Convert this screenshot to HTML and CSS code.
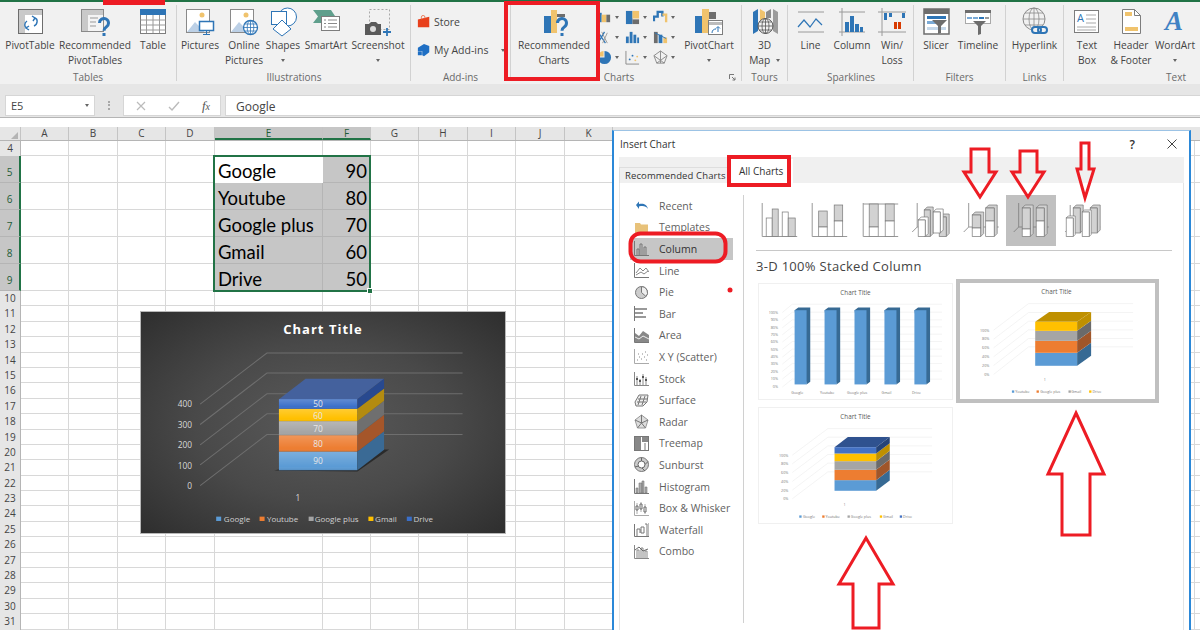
FILE: index.html
```html
<!DOCTYPE html>
<html lang="en">
<head>
  <meta charset="UTF-8">
  <meta name="viewport" content="width=device-width, initial-scale=1">
  <title>Insert Chart - Excel</title>
  <link rel="stylesheet" href="styles.css">
</head>
<body>
  <div class="top-strip"></div>

  <!-- Ribbon -->
  <div class="ribbon">
    <div class="group tables">
      <div class="tools">
        <div class="tool">
          <svg class="icon" viewBox="0 0 30 30"><rect x="3.500" y="2.500" width="24" height="24" fill="#fff" stroke="#6d6d6d"/><path d="M4 3h23v5H10v18H4z" fill="#c9c9c9"/><path d="M20 11c3 1 3 6-1 8M12 21c-3-1-3-5 0-7M17 9l3 2-2 3M14 23l-3-2 3-2" fill="none" stroke="#2e75b6" stroke-width="1.400"/></svg>
          <span>PivotTable</span>
        </div>
        <div class="tool">
          <svg class="icon" viewBox="0 0 30 30"><rect x="1.500" y="2.500" width="22" height="22" fill="#f4f4f4" stroke="#8a8a8a"/><path d="M2 3h21v5H8v16H2z" fill="#c9c9c9"/><path d="M10 11h8M10 15h6M10 19h6" stroke="#999"/><path d="M19.500 16a4.500 4.500 0 1 1 7 3.700c-1.800 1.200-2.500 2-2.500 4" fill="none" stroke="#2e75b6" stroke-width="3"/><rect x="22.500" y="26" width="3" height="3" fill="#2e75b6"/></svg>
          <span>Recommended<br>PivotTables</span>
        </div>
        <div class="tool">
          <svg class="icon" viewBox="0 0 30 30"><rect x="2.500" y="2.500" width="25" height="24" fill="#fff" stroke="#7d7d7d"/><rect x="2" y="2" width="26" height="6" fill="#2e75b6"/><path d="M2.500 13h25M2.500 18h25M2.500 23h25M8.500 8v18M15 8v18M21.500 8v18" stroke="#9a9a9a"/></svg>
          <span>Table</span>
        </div>
      </div>
      <div class="group-label">Tables</div>
    </div>

    <div class="group illustrations">
      <div class="tools">
        <div class="tool">
          <svg class="icon" viewBox="0 0 30 30"><rect x="1.500" y="2.500" width="23" height="23" fill="#fff" stroke="#8a8a8a"/><circle cx="17" cy="8" r="2.500" fill="#f0c36d"/><path d="M2 25l8-10 6 6 3-2v6z" fill="#bcd0e6"/><rect x="14.500" y="14.500" width="14" height="9" fill="#fff" stroke="#2e75b6" stroke-width="1.500"/><path d="M21.500 24v3M18 27.500h7" stroke="#2e75b6"/></svg>
          <span>Pictures</span>
        </div>
        <div class="tool">
          <svg class="icon" viewBox="0 0 30 30"><rect x="1.500" y="2.500" width="23" height="23" fill="#fff" stroke="#8a8a8a"/><circle cx="17" cy="8" r="2.500" fill="#f0c36d"/><path d="M2 25l8-10 6 6 3-2v6z" fill="#bcd0e6"/><circle cx="21.500" cy="20.500" r="7" fill="#fff" stroke="#2e75b6" stroke-width="1.300"/><path d="M14.500 20.500h14M21.500 13.500v14M16 17h11M16 24h11" stroke="#2e75b6" stroke-width=".8"/><ellipse cx="21.500" cy="20.500" rx="3.300" ry="7" fill="none" stroke="#2e75b6" stroke-width=".8"/></svg>
          <span>Online<br>Pictures</span>
        </div>
        <div class="tool">
          <svg class="icon" viewBox="0 0 30 30"><circle cx="19.500" cy="10" r="9" fill="#fff" stroke="#2e75b6"/><rect x="3.500" y="4.500" width="15" height="13" fill="#fff" stroke="#2e75b6"/><path d="M14 13l9 9-9 7-9-7z" fill="#fff" stroke="#2e75b6"/></svg>
          <span>Shapes</span>
          <i class="caret"></i>
        </div>
        <div class="tool">
          <svg class="icon" viewBox="0 0 30 30"><path d="M2 3h18l4 6H13l-3 3 3 4H2l5-6.500z" fill="#5f9f8c"/><rect x="10.500" y="9.500" width="18" height="14" fill="#fff" stroke="#7d7d7d"/><path d="M13 13h2M17 13h9M13 16.500h2M17 16.500h9M13 20h2M17 20h9" stroke="#8a8a8a"/></svg>
          <span>SmartArt</span>
        </div>
        <div class="tool">
          <svg class="icon" viewBox="0 0 30 30"><rect x="6.500" y="2.500" width="20" height="20" fill="none" stroke="#a9a9a9" stroke-dasharray="2 2"/><path d="M2 17h4l2-2h5l2 2h3v11H2z" fill="#5a5a5a"/><circle cx="10" cy="22" r="3" fill="#dcdcdc"/><path d="M24 21v8M20 25h8" stroke="#2e75b6" stroke-width="1.800"/></svg>
          <span>Screenshot</span>
          <i class="caret"></i>
        </div>
      </div>
      <div class="group-label">Illustrations</div>
    </div>

    <div class="group addins">
      <div class="addin-list">
        <div class="addin">
          <svg viewBox="0 0 16 16" width="14" height="14"><path d="M1 5l13-3v12H1z" fill="#e8401c"/><path d="M5 5V2.500a2 2 0 0 1 4 0V4" fill="none" stroke="#e8704c"/></svg>
          <span>Store</span>
        </div>
        <div class="addin">
          <svg viewBox="0 0 16 16" width="14" height="14"><path d="M8 1l6 2.500v7L8 15l-2-1V9H1V5.500z" fill="#1f6fc4"/><rect x="1" y="9.500" width="4.500" height="4.500" fill="#1f6fc4"/></svg>
          <span>My Add-ins</span>
          <i class="caret side"></i>
        </div>
      </div>
      <div class="group-label">Add-ins</div>
    </div>

    <div class="group charts">
      <div class="tools">
        <div class="tool">
          <svg class="icon" viewBox="0 0 30 30"><rect x="5" y="9" width="7" height="17" fill="#2e75b6"/><rect x="12" y="3" width="6" height="23" fill="#f0c36d"/><rect x="18" y="7" width="8" height="3" fill="#6d6d6d"/><path d="M18.500 16a4.500 4.500 0 1 1 7 3.700c-1.800 1.200-2.500 2-2.500 4" fill="none" stroke="#2e75b6" stroke-width="3"/><rect x="21.500" y="26" width="3" height="3" fill="#2e75b6"/></svg>
          <span>Recommended<br>Charts</span>
        </div>
        <div class="gallery">
          <div class="mini"><svg viewBox="0 0 16 16"><rect x="0" y="3" width="5" height="10" fill="#2e75b6"/><rect x="5" y="5" width="5" height="8" fill="#f0c36d"/><rect x="10" y="5" width="4" height="8" fill="#6d6d6d"/></svg><i class="caret"></i></div>
          <div class="mini"><svg viewBox="0 0 16 16"><rect x="1" y="1" width="7" height="14" fill="#2e75b6"/><rect x="8" y="1" width="7" height="8" fill="#f0c36d"/><rect x="8" y="10" width="7" height="5" fill="#6d6d6d"/></svg><i class="caret"></i></div>
          <div class="mini"><svg viewBox="0 0 16 16"><path d="M1 12V7h4V2h5v5" fill="none" stroke="#2e75b6" stroke-width="2.500"/><path d="M10 5h4v8" fill="none" stroke="#f0c36d" stroke-width="2.500"/></svg><i class="caret"></i></div>
          <div class="mini"><svg viewBox="0 0 16 16"><path d="M1 2l8 12M8 2l-7 12" stroke="#2e75b6" stroke-width="1.300"/><path d="M5 2l6 12M11 3l-5 11" stroke="#9a9a9a"/></svg><i class="caret"></i></div>
          <div class="mini"><svg viewBox="0 0 16 16"><rect x="1" y="7" width="3" height="7" fill="#2e75b6"/><rect x="5" y="2" width="3" height="12" fill="#2e75b6"/><rect x="9" y="5" width="3" height="9" fill="#2e75b6"/><rect x="13" y="8" width="2" height="6" fill="#2e75b6"/></svg><i class="caret"></i></div>
          <div class="mini"><svg viewBox="0 0 16 16"><rect x="1" y="2" width="4" height="12" fill="#6d6d6d"/><rect x="6" y="5" width="4" height="9" fill="#2e75b6"/><rect x="11" y="8" width="4" height="6" fill="#f0c36d"/><path d="M2 3l6 3 6 3" stroke="#2e75b6" fill="none"/></svg><i class="caret"></i></div>
          <div class="mini"><svg viewBox="0 0 16 16"><path d="M8 1a7 7 0 1 1-7 7h7z" fill="#2e75b6"/><path d="M1 7a7 7 0 0 1 6-6v6z" fill="#f0c36d"/></svg><i class="caret"></i></div>
          <div class="mini"><svg viewBox="0 0 16 16"><path d="M1 1v14h14" fill="none" stroke="#8a8a8a"/><circle cx="5" cy="10" r="1" fill="#2e75b6"/><circle cx="8" cy="6" r="1" fill="#2e75b6"/><circle cx="11" cy="11" r="1" fill="#f0c36d"/><circle cx="13" cy="7" r="1" fill="#f0c36d"/></svg><i class="caret"></i></div>
          <div class="mini"><svg viewBox="0 0 16 16"><path d="M8 1l7 5-3 8H4L1 6zM8 1v13M1 6l11 8M15 6L4 14" fill="none" stroke="#8a8a8a"/></svg><i class="caret"></i></div>
        </div>
        <div class="tool">
          <svg class="icon" viewBox="0 0 30 30"><rect x="1" y="9" width="7" height="17" fill="#2e75b6"/><rect x="8" y="2" width="7" height="24" fill="#f0c36d"/><rect x="15" y="5" width="7" height="7" fill="#6d6d6d"/><rect x="14.500" y="13.500" width="14" height="14" fill="#fff" stroke="#7d7d7d"/><path d="M15 15h13v3H15z" fill="#bcbcbc"/><path d="M18 26c0-3 2-4 4-4M24 25v-5M22 21.500l2-2 2 2" stroke="#2e75b6" fill="none"/></svg>
          <span>PivotChart</span>
          <i class="caret"></i>
        </div>
      </div>
      <div class="group-label">Charts</div>
      <svg class="launcher" viewBox="0 0 7 7"><path d="M.5 5V.5H5M3 3l3 3M6 3.500V6H3.500" fill="none" stroke="#777"/></svg>
    </div>

    <div class="group tours">
      <div class="tools">
        <div class="tool">
          <svg class="icon" viewBox="0 0 30 30"><path d="M3 5l5-3v22l-5 3z" fill="#2e75b6"/><path d="M10 2l5 3v8h-5z" fill="#f0c36d"/><path d="M16 5l5-3v9h-5z" fill="#8c8c8c"/><path d="M23 2l5 3v22l-5-3z" fill="#9c9c9c"/><circle cx="15.500" cy="19" r="7.500" fill="#f1f1f1" stroke="#555"/><path d="M8 19h15M15.500 11.500v15M9.500 15h12M9.500 23h12" stroke="#555" stroke-width=".8"/><ellipse cx="15.500" cy="19" rx="3.500" ry="7.500" fill="none" stroke="#555" stroke-width=".8"/></svg>
          <span>3D<br>Map <i class="caret side"></i></span>
        </div>
      </div>
      <div class="group-label">Tours</div>
    </div>

    <div class="group sparklines">
      <div class="tools">
        <div class="tool">
          <svg class="icon" viewBox="0 0 30 30"><path d="M2 5h26M2 25h26" stroke="#9a9a9a"/><path d="M2 20l6-7 6 7 6-8 6 6" fill="none" stroke="#2e75b6" stroke-width="1.200"/></svg>
          <span>Line</span>
        </div>
        <div class="tool">
          <svg class="icon" viewBox="0 0 30 30"><path d="M2 5h26M2 25h26M5 1v28" stroke="#9a9a9a"/><rect x="8" y="15" width="4" height="10" fill="#2e75b6"/><rect x="13" y="9" width="4" height="16" fill="#2e75b6"/><rect x="18" y="17" width="4" height="8" fill="#2e75b6"/><rect x="23" y="20" width="3" height="5" fill="#2e75b6"/></svg>
          <span>Column</span>
        </div>
        <div class="tool">
          <svg class="icon" viewBox="0 0 30 30"><path d="M1 5h28M1 25h28M5 1v28" stroke="#9a9a9a"/><rect x="7" y="6" width="3" height="7" fill="#2e75b6"/><rect x="12" y="6" width="3" height="4" fill="#2e75b6"/><rect x="17" y="15" width="3" height="7" fill="#d83b01"/><rect x="21" y="15" width="3" height="7" fill="#d83b01"/><rect x="25" y="6" width="3" height="5" fill="#2e75b6"/></svg>
          <span>Win/<br>Loss</span>
        </div>
      </div>
      <div class="group-label">Sparklines</div>
    </div>

    <div class="group filters">
      <div class="tools">
        <div class="tool">
          <svg class="icon" viewBox="0 0 30 30"><rect x="3" y="2" width="25" height="25" fill="#fff" stroke="#6d6d6d" stroke-width="1.500"/><rect x="3" y="2" width="25" height="5" fill="#6d6d6d"/><rect x="6" y="9" width="19" height="3" fill="#2e75b6"/><rect x="6" y="14" width="10" height="3" fill="#7aaad6"/><rect x="6" y="20" width="19" height="3" fill="#c5d8ea"/><path d="M11 13h15l-6 6v7l-3 1v-8z" fill="#6d6d6d"/></svg>
          <span>Slicer</span>
        </div>
        <div class="tool">
          <svg class="icon" viewBox="0 0 30 30"><rect x="2.500" y="3.500" width="25" height="13" fill="#fff" stroke="#a9a9a9"/><rect x="2" y="3" width="26" height="3" fill="#6d6d6d"/><path d="M4 11h5M10 11h5" stroke="#7aaad6" stroke-width="2"/><path d="M16 11h5" stroke="#2e75b6" stroke-width="2"/><path d="M22 11h4" stroke="#9a9a9a" stroke-width="2"/><path d="M10 14h13l-5 5v8l-3 1v-9z" fill="#6d6d6d"/></svg>
          <span>Timeline</span>
        </div>
      </div>
      <div class="group-label">Filters</div>
    </div>

    <div class="group links">
      <div class="tools">
        <div class="tool">
          <svg class="icon" viewBox="0 0 30 30"><circle cx="14" cy="12" r="11" fill="none" stroke="#8a8a8a"/><path d="M3 12h22M14 1v22M5 6h18M5 18h18" stroke="#8a8a8a" stroke-width=".8"/><ellipse cx="14" cy="12" rx="5" ry="11" fill="none" stroke="#8a8a8a" stroke-width=".8"/><rect x="12" y="20" width="9" height="6" rx="3" fill="#f1f1f1" stroke="#2e75b6" stroke-width="2"/><rect x="18" y="20" width="9" height="6" rx="3" fill="none" stroke="#2e75b6" stroke-width="2"/></svg>
          <span>Hyperlink</span>
        </div>
      </div>
      <div class="group-label">Links</div>
    </div>

    <div class="group text-group">
      <div class="tools">
        <div class="tool">
          <svg class="icon" viewBox="0 0 30 30"><rect x="2.500" y="3.500" width="24" height="22" fill="#fff" stroke="#7d7d7d"/><text class="word-a" x="5" y="15" font-size="11">A</text><path d="M14 8h10M14 12h10M14 16h10M5 20h19M5 23h19" stroke="#a9a9a9"/></svg>
          <span>Text<br>Box</span>
        </div>
        <div class="tool">
          <svg class="icon" viewBox="0 0 30 30"><path d="M6.500 2.500h12l6 6v18h-18z" fill="#fff" stroke="#7d7d7d"/><path d="M18.500 2.500v6h6" fill="none" stroke="#7d7d7d"/><rect x="9" y="5" width="7" height="4" fill="#f0c36d"/><rect x="9" y="20" width="13" height="4" fill="#f0c36d"/></svg>
          <span>Header<br>&amp; Footer</span>
        </div>
        <div class="tool">
          <svg class="icon" viewBox="0 0 30 30"><text class="word-art" x="5" y="23" font-size="27">A</text></svg>
          <span>WordArt</span>
          <i class="caret"></i>
        </div>
      </div>
      <div class="group-label">Text</div>
    </div>
  </div>

  <!-- Formula bar -->
  <div class="formula-bar">
    <div class="name-box">E5<i class="caret"></i></div>
    <div class="grip"></div>
    <div class="fn-box">
      <svg viewBox="0 0 10 10" width="10" height="10"><path d="M1 1l8 8M9 1l-8 8" stroke="#bbb" stroke-width="1.200"/></svg>
      <svg viewBox="0 0 12 10" width="12" height="10"><path d="M1 6l3 3 7-8" fill="none" stroke="#bbb" stroke-width="1.400"/></svg>
      <span class="fx">f<small>x</small></span>
    </div>
    <div class="formula-input">Google</div>
  </div>

  <!-- Worksheet -->
  <div class="sheet">
    <div class="row head">
      <span class="corner"></span>
      <span>A</span><span>B</span><span>C</span><span>D</span>
      <span class="on">E</span><span class="on">F</span>
      <span>G</span><span>H</span><span>I</span><span>J</span><span>K</span>
    </div>
    <div class="row"><span class="rh">4</span></div>
    <div class="row data"><span class="rh on">5</span><span class="cell name active">Google</span><span class="cell val">90</span></div>
    <div class="row data"><span class="rh on">6</span><span class="cell name">Youtube</span><span class="cell val">80</span></div>
    <div class="row data"><span class="rh on">7</span><span class="cell name">Google plus</span><span class="cell val">70</span></div>
    <div class="row data"><span class="rh on">8</span><span class="cell name">Gmail</span><span class="cell val">60</span></div>
    <div class="row data"><span class="rh on">9</span><span class="cell name">Drive</span><span class="cell val">50</span></div>
    <div class="row"><span class="rh">10</span></div>
    <div class="row"><span class="rh">11</span></div>
    <div class="row"><span class="rh">12</span></div>
    <div class="row"><span class="rh">13</span></div>
    <div class="row"><span class="rh">14</span></div>
    <div class="row"><span class="rh">15</span></div>
    <div class="row"><span class="rh">16</span></div>
    <div class="row"><span class="rh">17</span></div>
    <div class="row"><span class="rh">18</span></div>
    <div class="row"><span class="rh">19</span></div>
    <div class="row"><span class="rh">20</span></div>
    <div class="row"><span class="rh">21</span></div>
    <div class="row"><span class="rh">22</span></div>
    <div class="row"><span class="rh">23</span></div>
    <div class="row"><span class="rh">24</span></div>
    <div class="row"><span class="rh">25</span></div>
    <div class="row"><span class="rh">26</span></div>
    <div class="row"><span class="rh">27</span></div>
    <div class="row"><span class="rh">28</span></div>
    <div class="row"><span class="rh">29</span></div>
    <div class="row"><span class="rh">30</span></div>
    <div class="row"><span class="rh">31</span></div>
    <div class="selection"><i class="handle"></i></div>
  </div>

  <!-- Chart floating on the sheet -->
  <div class="dark-chart">
    <svg viewBox="35 20 1090 662" width="364" height="221">
      <defs>
        <linearGradient id="sheen" x1="0" y1="0" x2="0" y2="1">
          <stop offset="0" stop-color="#fff" stop-opacity=".2"/>
          <stop offset=".8" stop-color="#fff" stop-opacity="0"/>
          <stop offset="1" stop-color="#000" stop-opacity=".1"/>
        </linearGradient>
      </defs>
      <text class="dc-title" x="580" y="86" text-anchor="middle">Chart Title</text>
      <g fill="none" stroke="#6e6e6e" stroke-width="3">
        <path d="M212 540L412 387H998M212 478L412 325H998M212 418L412 265H998M212 357L412 203H998M212 296L412 143H998"/>
      </g>
      <g class="dc-axis" text-anchor="end">
        <text x="188" y="305">400</text><text x="188" y="367">300</text><text x="188" y="428">200</text><text x="188" y="489">100</text><text x="188" y="549">0</text>
      </g>
      <path d="M434 495L683 498L778 432L700 432z" fill="#2a2a2a"/>
      <path d="M448 281L528 220H763L683 281z" fill="#44619d"/>
      <rect x="448" y="438" width="235" height="56" fill="#5b9bd5"/>
      <rect x="448" y="389" width="235" height="49" fill="#ed7d31"/>
      <rect x="448" y="347" width="235" height="42" fill="#a5a5a5"/>
      <rect x="448" y="310" width="235" height="37" fill="#ffc000"/>
      <rect x="448" y="281" width="235" height="29" fill="#3a6fc9"/>
      <rect x="448" y="438" width="235" height="56" fill="url(#sheen)"/>
      <rect x="448" y="389" width="235" height="49" fill="url(#sheen)"/>
      <rect x="448" y="347" width="235" height="42" fill="url(#sheen)"/>
      <rect x="448" y="310" width="235" height="37" fill="url(#sheen)"/>
      <rect x="448" y="281" width="235" height="29" fill="url(#sheen)"/>
      <path d="M683 438L763 377V433L683 494z" fill="#3a6a95"/>
      <path d="M683 389L763 328V377L683 438z" fill="#a5562a"/>
      <path d="M683 347L763 286V328L683 389z" fill="#6f6f6f"/>
      <path d="M683 310L763 249V286L683 347z" fill="#b38b10"/>
      <path d="M683 281L763 220V249L683 310z" fill="#28498f"/>
      <g class="dc-data" text-anchor="middle">
        <text x="565" y="476">90</text><text x="565" y="425">80</text><text x="565" y="379">70</text><text x="565" y="342">60</text><text x="565" y="306">50</text>
      </g>
      <text class="dc-axis" x="505" y="585" text-anchor="middle">1</text>
      <rect x="260" y="633" width="15" height="13" fill="#5b9bd5"/><text class="dc-legend" x="283" y="648">Google</text>
      <rect x="390" y="633" width="15" height="13" fill="#ed7d31"/><text class="dc-legend" x="412" y="648">Youtube</text>
      <rect x="537" y="633" width="15" height="13" fill="#a5a5a5"/><text class="dc-legend" x="555" y="648">Google plus</text>
      <rect x="716" y="633" width="15" height="13" fill="#ffc000"/><text class="dc-legend" x="736" y="648">Gmail</text>
      <rect x="831" y="633" width="15" height="13" fill="#3a6fc9"/><text class="dc-legend" x="851" y="648">Drive</text>
    </svg>
  </div>

  <!-- Insert Chart dialog -->
  <div class="dialog">
    <div class="dialog-title">
      <span>Insert Chart</span>
      <span class="help">?</span>
      <svg class="close" viewBox="0 0 10 10" width="10" height="10"><path d="M.5 .5l9 9M9.500 .5l-9 9" stroke="#444"/></svg>
    </div>
    <div class="tabs">
      <div class="tab">Recommended Charts</div>
      <div class="tab current">All Charts</div>
    </div>
    <div class="dialog-body">
      <div class="type-list">
        <div class="type blue"><svg viewBox="0 0 15 15"><path d="M2 7l3-3.500v2.500c4-1 8 0 9 5-2-3-5-3.500-9-2.500v2.500z" fill="#2e75b6"/></svg>Recent</div>
        <div class="type"><svg viewBox="0 0 15 15"><path d="M1 3h5l1 1.500h7V13H1z" fill="#e8c27a"/></svg>Templates</div>
        <div class="type selected"><svg viewBox="0 0 15 15"><path d="M.5 0v14.500H15M3 14V8h2v6M6 14V3h2v11M10 14V6h2v8" fill="none" stroke="#777"/></svg>Column</div>
        <div class="type"><svg viewBox="0 0 15 15"><path d="M.5 0v14.500H15" fill="none" stroke="#777"/><path d="M2 10l4-5 3 3 3-3 3 4M2 12l5-3 3 2 4-3" fill="none" stroke="#888"/></svg>Line</div>
        <div class="type"><svg viewBox="0 0 15 15"><circle cx="7.500" cy="7.500" r="6" fill="#ccc" stroke="#777"/><path d="M7.500 1.500v6l4.500 4a6 6 0 0 0-4.500-10z" fill="#eee" stroke="#777"/></svg>Pie</div>
        <div class="type"><svg viewBox="0 0 15 15"><path d="M.5 0v15" stroke="#777"/><path d="M1 2h12v2H1zM1 6h8v2H1zM1 10h11v2H1z" fill="#999"/></svg>Bar</div>
        <div class="type"><svg viewBox="0 0 15 15"><path d="M.5 0v14.500H15" fill="none" stroke="#777"/><path d="M1 5l4 3 4-5 6 4v7H1z" fill="#888"/><path d="M1 9l4 2 4-3 6 3" fill="none" stroke="#eee"/></svg>Area</div>
        <div class="type"><svg viewBox="0 0 15 15"><path d="M.5 0v14.500H15" fill="none" stroke="#aaa"/><path d="M3 11h1M5 8h1M7 10h1M8 5h1M10 8h1M11 3h1M13 6h1M4 5h1M12 11h1" stroke="#888" stroke-dasharray="1 1"/></svg>X Y (Scatter)</div>
        <div class="type"><svg viewBox="0 0 15 15"><path d="M.5 1v13.500H15M3 5v9M6 8v6M9 3v11M12 6v8" fill="none" stroke="#888"/><path d="M2 8h2M5 10h2M8 6h2M11 9h2" stroke="#555" stroke-width="2"/></svg>Stock</div>
        <div class="type"><svg viewBox="0 0 15 15"><path d="M1 9l4-7h9l-1 7-4 4H2zM4 6h9M3 9h9M7 3l-3 9M11 3l-3 9" fill="#eee" stroke="#777"/></svg>Surface</div>
        <div class="type"><svg viewBox="0 0 15 15"><path d="M7.500 1l6.500 5-2.500 8h-8L1 6z" fill="#ddd" stroke="#999"/><path d="M7.500 1v8l-4 5M7.500 9l4 5M1 6l6.500 3L14 6" fill="none" stroke="#777"/></svg>Radar</div>
        <div class="type"><svg viewBox="0 0 15 15"><rect x=".5" y=".5" width="14" height="14" fill="#fff" stroke="#777"/><path d="M1 1h6v13H1zM8 1h6v5H8z" fill="#888"/><path d="M11 7v7" stroke="#777"/></svg>Treemap</div>
        <div class="type"><svg viewBox="0 0 15 15"><circle cx="7.500" cy="7.500" r="7" fill="#ccc" stroke="#777"/><circle cx="7.500" cy="7.500" r="3.500" fill="#fff" stroke="#666"/><path d="M7.500 .5v3.500M1 10l3.500-1M11 7.500l3-3M8 11l3 3" stroke="#666"/></svg>Sunburst</div>
        <div class="type"><svg viewBox="0 0 15 15"><path d="M.5 0v14.500H15" fill="none" stroke="#777"/><path d="M2 9h2v5H2zM5 4h3v10H5zM8 2h2v12H8zM11 8h2v6h-2z" fill="#aaa" stroke="#777" stroke-width=".6"/></svg>Histogram</div>
        <div class="type"><svg viewBox="0 0 15 15"><path d="M.5 0v14.500H15M3 2v11M7 1v10M11 3v10" fill="none" stroke="#aaa"/><path d="M2 5h2v4H2zM6 3h2v5H6zM10 6h2v5h-2z" fill="#fff" stroke="#666"/></svg>Box &amp; Whisker</div>
        <div class="type"><svg viewBox="0 0 15 15"><path d="M.5 2v12.500H15V1M3 14V7M3 7h3v4M7 5h3v6h-3zM11 2h2v12" fill="none" stroke="#777"/></svg>Waterfall</div>
        <div class="type"><svg viewBox="0 0 15 15"><path d="M.5 1v13.500H15M3 14V6h2v8M7 14V4h2v10M11 14V7h2v7" fill="none" stroke="#888"/><path d="M1 6l4-3 4 4 5-2" fill="none" stroke="#666"/></svg>Combo</div>
      </div>

      <div class="pane">
        <div class="subtypes">
          <button class="subtype"><svg viewBox="0 0 50 51"><path d="M8 8v33.500h35" fill="none" stroke="#999"/><rect class="w" x="12" y="23" width="6" height="18.500"/><rect class="g" x="18" y="14" width="6" height="27.500"/><rect class="w" x="28" y="17" width="6" height="24.500"/><rect class="g" x="34" y="23" width="7" height="18.500"/></svg></button>
          <button class="subtype"><svg viewBox="0 0 50 51"><path d="M8 8v33.500h35" fill="none" stroke="#999"/><rect class="g" x="14.500" y="16" width="8.500" height="16"/><rect class="w" x="14.500" y="32" width="8.500" height="9.500"/><rect class="g" x="30" y="10" width="8.500" height="16"/><rect class="w" x="30" y="26" width="8.500" height="15.500"/></svg></button>
          <button class="subtype"><svg viewBox="0 0 50 51"><path d="M8 8v33.500h35M8 9h35" fill="none" stroke="#999"/><rect class="g" x="14" y="9" width="9" height="23"/><rect class="w" x="14" y="32" width="9" height="9.500"/><rect class="g" x="30" y="9" width="9" height="17"/><rect class="w" x="30" y="26" width="9" height="15.500"/></svg></button>
          <button class="subtype"><svg viewBox="0 0 50 51"><path d="M12 8v24L7 37M12 32h30" fill="none" stroke="#999"/><path class="g" d="M19 15l3-3h6v26.500l-3 3V15z"/><rect class="g" x="19" y="15" width="6" height="26.500"/><path class="w" d="M13 25l3-3h7v16.500l-3 3V25z"/><rect class="w" x="13" y="25" width="7" height="16.500"/><path class="g" d="M34 22l3-3h7v19.500l-3 3V22z"/><rect class="g" x="34" y="22" width="7" height="19.500"/><path class="w" d="M28 17l3-3h7v21l-3 3V17z"/><rect class="w" x="28" y="17" width="7" height="21"/></svg></button>
          <button class="subtype"><svg viewBox="0 0 50 51"><path d="M12.500 8v24L7.500 37M12.500 32h30" fill="none" stroke="#999"/><path class="g" d="M16 20l3-3h8.500v21.500l-3 3V20z"/><rect class="g" x="16" y="20" width="8.500" height="13"/><rect class="w" x="16" y="33" width="8.500" height="8.500"/><path class="g" d="M29.500 13l3-3h8.500v28.500l-3 3V13z"/><rect class="g" x="29.500" y="13" width="8.500" height="13"/><rect class="w" x="29.500" y="26" width="8.500" height="15.500"/></svg></button>
          <button class="subtype on"><svg viewBox="0 0 50 51"><path d="M12.500 8v24L7.500 37M12.500 32h30" fill="none" stroke="#888"/><path class="g" d="M16 13l3-3h8v28.500l-3 3V13z"/><rect class="g" x="16" y="13" width="8" height="21"/><rect class="w" x="16" y="34" width="8" height="7.500"/><path class="g" d="M30 13l3-3h8v28.500l-3 3V13z"/><rect class="g" x="30" y="13" width="8" height="13"/><rect class="w" x="30" y="26" width="8" height="15.500"/></svg></button>
          <button class="subtype"><svg viewBox="0 0 50 51"><path d="M14 10v22L9 37M14 32h30" fill="none" stroke="#999"/><path class="g" d="M17 13l3-3h7v25l-3 3V13z"/><rect class="g" x="17" y="13" width="7" height="25"/><path class="g" d="M34 13l3-3h7v25l-3 3V13z"/><rect class="g" x="34" y="13" width="7" height="25"/><path class="w" d="M10 23l2-2h7v18.500l-2 2V23z"/><rect class="w" x="10" y="23" width="7" height="18.500"/><path class="w" d="M26 17l2-2h7v24.500l-2 2V17z"/><rect class="w" x="26" y="17" width="7" height="24.500"/></svg></button>
        </div>
        <div class="pane-rule"></div>
        <div class="pane-heading">3-D 100% Stacked Column</div>

        <div class="previews">
          <div class="preview">
            <svg viewBox="25 25 583 347" width="194" height="116">
              <text class="pv-title" x="315" y="57" text-anchor="middle">Chart Title</text>
              <g stroke="#efefef" stroke-width="2" fill="none">
                <path d="M95 334L125 310H575M95 310L125 286H575M95 287L125 263H575M95 265L125 241H575M95 244L125 220H575M95 221L125 197H575M95 199L125 175H575M95 177L125 153H575M95 156L125 132H575M95 133L125 109H575M95 110L125 85H575"/>
              </g>
              <g class="pv-axis" text-anchor="end">
                <text x="82" y="113">100%</text><text x="82" y="136">90%</text><text x="82" y="159">80%</text><text x="82" y="181">70%</text><text x="82" y="203">60%</text><text x="82" y="225">50%</text><text x="82" y="248">40%</text><text x="82" y="269">30%</text><text x="82" y="291">20%</text><text x="82" y="314">10%</text><text x="82" y="338">0%</text>
              </g>
              <g>
                <path d="M132 103l11-8h36v223l-11 8z" fill="#376a94"/><rect x="132" y="103" width="36" height="223" fill="#5b9bd5"/>
                <path d="M222 103l11-8h36v223l-11 8z" fill="#376a94"/><rect x="222" y="103" width="36" height="223" fill="#5b9bd5"/>
                <path d="M312 103l11-8h36v223l-11 8z" fill="#376a94"/><rect x="312" y="103" width="36" height="223" fill="#5b9bd5"/>
                <path d="M402 103l11-8h36v223l-11 8z" fill="#376a94"/><rect x="402" y="103" width="36" height="223" fill="#5b9bd5"/>
                <path d="M492 103l11-8h36v223l-11 8z" fill="#376a94"/><rect x="492" y="103" width="36" height="223" fill="#5b9bd5"/>
              </g>
              <g class="pv-axis" text-anchor="middle">
                <text x="140" y="354">Google</text><text x="230" y="354">Youtube</text><text x="320" y="354">Google plus</text><text x="408" y="354">Gmail</text><text x="498" y="354">Drive</text>
              </g>
            </svg>
          </div>
          <div class="preview picked">
            <svg viewBox="632 24 583 347" width="194" height="116">
              <text class="pv-title" x="922" y="57" text-anchor="middle">Chart Title</text>
              <path d="M733 298L838 215H1152M733 271L838 190H1152M733 245L838 164H1152M733 218L838 138H1152M733 192L838 112H1152M733 165L838 85H1152" fill="none" stroke="#efefef" stroke-width="2"/>
              <g class="pv-axis" text-anchor="end">
                <text x="720" y="169">100%</text><text x="720" y="196">80%</text><text x="720" y="222">60%</text><text x="720" y="249">40%</text><text x="720" y="275">20%</text><text x="720" y="302">0%</text>
              </g>
              <path d="M858 140L900 110H1026L984 140z" fill="#bf9000"/>
              <rect x="858" y="233" width="126" height="39" fill="#5b9bd5"/>
              <rect x="858" y="197" width="126" height="36" fill="#ed7d31"/>
              <rect x="858" y="167" width="126" height="30" fill="#a5a5a5"/>
              <rect x="858" y="140" width="126" height="27" fill="#ffc000"/>
              <path d="M984 233L1026 203V242L984 272z" fill="#376a94"/>
              <path d="M984 197L1026 167V203L984 233z" fill="#a0562a"/>
              <path d="M984 167L1026 137V167L984 197z" fill="#6a6a6a"/>
              <path d="M984 140L1026 110V137L984 167z" fill="#bf9000"/>
              <text class="pv-axis" x="887" y="319" text-anchor="middle">1</text>
              <rect x="788" y="346" width="7" height="7" fill="#5b9bd5"/><text class="pv-legend" x="798" y="354">Youtube</text>
              <rect x="862" y="346" width="7" height="7" fill="#ed7d31"/><text class="pv-legend" x="873" y="354">Google plus</text>
              <rect x="958" y="346" width="7" height="7" fill="#a5a5a5"/><text class="pv-legend" x="966" y="354">Gmail</text>
              <rect x="1020" y="346" width="7" height="7" fill="#ffc000"/><text class="pv-legend" x="1030" y="354">Drive</text>
            </svg>
          </div>
          <div class="preview">
            <svg viewBox="25 22 583 347" width="194" height="116">
              <text class="pv-title" x="315" y="55" text-anchor="middle">Chart Title</text>
              <path d="M125 294L232 213H545M125 268L232 187H545M125 242L232 161H545M125 215L232 135H545M125 189L232 109H545M125 163L232 83H545" fill="none" stroke="#efefef" stroke-width="2"/>
              <g class="pv-axis" text-anchor="end">
                <text x="113" y="167">100%</text><text x="113" y="193">80%</text><text x="113" y="219">60%</text><text x="113" y="246">40%</text><text x="113" y="273">20%</text><text x="113" y="298">0%</text>
              </g>
              <path d="M252 139L292 108H418L377 139z" fill="#2f528f"/>
              <rect x="252" y="238" width="125" height="32" fill="#5b9bd5"/>
              <rect x="252" y="207" width="125" height="31" fill="#ed7d31"/>
              <rect x="252" y="181" width="125" height="26" fill="#a5a5a5"/>
              <rect x="252" y="158" width="125" height="23" fill="#ffc000"/>
              <rect x="252" y="139" width="125" height="19" fill="#4472c4"/>
              <path d="M377 238L418 207V239L377 270z" fill="#376a94"/>
              <path d="M377 207L418 176V207L377 238z" fill="#a0562a"/>
              <path d="M377 181L418 150V176L377 207z" fill="#6a6a6a"/>
              <path d="M377 158L418 127V150L377 181z" fill="#bf9000"/>
              <path d="M377 139L418 108V127L377 158z" fill="#264478"/>
              <text class="pv-axis" x="282" y="317" text-anchor="middle">1</text>
              <rect x="146" y="344" width="7" height="7" fill="#5b9bd5"/><text class="pv-legend" x="157" y="352">Google</text>
              <rect x="215" y="344" width="7" height="7" fill="#ed7d31"/><text class="pv-legend" x="225" y="352">Youtube</text>
              <rect x="291" y="344" width="7" height="7" fill="#a5a5a5"/><text class="pv-legend" x="301" y="352">Google plus</text>
              <rect x="388" y="344" width="7" height="7" fill="#ffc000"/><text class="pv-legend" x="398" y="352">Gmail</text>
              <rect x="448" y="344" width="7" height="7" fill="#4472c4"/><text class="pv-legend" x="458" y="352">Drive</text>
            </svg>
          </div>
        </div>
      </div>
    </div>
  </div>

  <!-- Red annotations drawn on top of the screenshot -->
  <svg class="marks" viewBox="0 0 1200 630">
    <rect class="mark-fill" x="103" y="0" width="62" height="5"/>
    <rect class="heavy" x="506" y="3" width="92" height="76"/>
    <rect class="heavy" x="729" y="157" width="60" height="28"/>
    <rect class="heavy" x="630.500" y="233.500" width="95" height="28" rx="10"/>
    <circle class="mark-fill" cx="730" cy="290" r="2.500"/>
    <path d="M971 149h18v23h7l-16 25-16-25h7z"/>
    <path d="M1020 151h17v21h7l-16 25-16-25h8z"/>
    <path d="M1081 143h8v26h5l-9 29-8-29h4z"/>
    <path d="M1076 413l28 61h-14v61h-28v-61h-14z"/>
    <path d="M866 538l27 46h-14v44h-26v-44h-14z"/>
  </svg>
</body>
</html>
```

FILE: styles.css
```css
html, body {
  margin: 0;
  padding: 0;
}
body {
  position: relative;
  width: 1200px;
  height: 630px;
  overflow: hidden;
  background-color: #ffffff;
  font-family: "Open Sans", "Liberation Sans", sans-serif;
  color: #444444;
}
.top-strip {
  height: 2px;
  background-color: #217346;
}

/* ribbon */
.ribbon {
  display: flex;
  height: 82px;
  width: 1200px;
  padding-top: 3px;
  box-sizing: border-box;
  background-color: #f1f1f1;
}
.group {
  position: relative;
  flex: none;
  display: flex;
  flex-direction: column;
  box-sizing: border-box;
  height: 76px;
  border-right: 1px solid #d2d2d2;
}
.tables { width: 177px; }
.illustrations { width: 234px; padding-left: 1px; }
.addins { width: 100px; }
.charts { width: 231px; }
.tours { width: 46px; }
.sparklines { width: 126px; padding-left: 1px; }
.filters { width: 92px; }
.links { width: 58px; }
.text-group { width: 136px; border-right: none; }
.tools {
  display: grid;
  grid-auto-flow: column;
  height: 65px;
  padding-top: 2px;
  box-sizing: border-box;
}
.tables .tools { grid-template-columns: 60px 70px 46px; }
.illustrations .tools { grid-template-columns: 44px 44px 34px 52px 52px; }
.charts .tools { grid-template-columns: 86px 85px 54px; }
.tours .tools { grid-template-columns: 45px; }
.sparklines .tools { grid-template-columns: 43px 40px 40px; }
.filters .tools { grid-template-columns: 44px 40px; }
.links .tools { grid-template-columns: 57px; }
.text-group .tools { grid-template-columns: 46px 42px 46px; }
.tool {
  display: flex;
  flex-direction: column;
  align-items: center;
  min-width: 0;
  font-size: 10.2px;
  line-height: 15px;
  text-align: center;
  white-space: nowrap;
}
.icon {
  flex: none;
  width: 30px;
  height: 30px;
  margin-bottom: 1px;
}
.caret {
  display: inline-block;
  width: 0;
  height: 0;
  margin-top: 6px;
  border-left: 2.5px solid transparent;
  border-right: 2.5px solid transparent;
  border-top: 3px solid #666666;
}
.caret.side {
  margin: 0 0 2px 3px;
  vertical-align: middle;
}
.group-label {
  height: 11px;
  font-size: 10px;
  line-height: 15px;
  text-align: center;
  color: #6a6a6a;
}
.charts .group-label { padding-right: 14px; }
.text-group .group-label { padding-left: 88px; }
.launcher {
  position: absolute;
  right: 5px;
  bottom: 0;
  width: 7px;
  height: 7px;
}
.word-a {
  font-family: "Open Sans", sans-serif;
  fill: #2e75b6;
}
.word-art {
  font-family: "Liberation Serif", serif;
  font-style: italic;
  font-weight: bold;
  fill: #3f82c4;
}
.addin-list {
  height: 65px;
  padding: 3px 0 0 6px;
  box-sizing: border-box;
}
.addin {
  display: flex;
  align-items: center;
  gap: 3px;
  height: 28px;
  font-size: 10.5px;
  white-space: nowrap;
}
.addin .caret.side { margin: 0 0 0 10px; }
.gallery {
  display: grid;
  grid-template-columns: repeat(3, 28px);
  grid-auto-rows: 20px;
}
.mini {
  display: flex;
  align-items: center;
  gap: 3px;
}
.mini svg {
  width: 15px;
  height: 15px;
}
.mini .caret { margin-top: 0; }

/* formula bar */
.formula-bar {
  display: flex;
  height: 34px;
  padding: 11px 0 1px 5px;
  box-sizing: border-box;
  background-color: #e6e6e6;
  border-bottom: 1px solid #b5b5b5;
}
.name-box, .fn-box, .formula-input {
  background-color: #ffffff;
  border: 1px solid #d6d6d6;
  box-sizing: border-box;
}
.name-box {
  display: flex;
  align-items: center;
  justify-content: space-between;
  width: 90px;
  padding: 0 5px 0 5px;
  font-size: 11px;
}
.name-box .caret { margin-top: 0; }
.grip {
  width: 1px;
  height: 9px;
  margin: 6px 12px 0 13px;
  border-left: 2px dotted #a8a8a8;
}
.fn-box {
  display: flex;
  align-items: center;
  justify-content: space-between;
  width: 98px;
  margin-right: 4px;
  padding: 0 10px 0 12px;
}
.fx {
  font-family: "Liberation Serif", serif;
  font-style: italic;
  font-size: 13px;
  color: #555555;
}
.fx small { font-size: 10px; }
.formula-input {
  flex: 1;
  padding-left: 10px;
  font-size: 12px;
  line-height: 22px;
  border-right: none;
}

/* worksheet */
.sheet {
  --line: #d8d8d8;
  position: relative;
  margin-top: 9px;
  height: 503px;
  background-image:
    linear-gradient(var(--line), var(--line)), linear-gradient(var(--line), var(--line)),
    linear-gradient(var(--line), var(--line)), linear-gradient(var(--line), var(--line)),
    linear-gradient(var(--line), var(--line)), linear-gradient(var(--line), var(--line)),
    linear-gradient(var(--line), var(--line)), linear-gradient(var(--line), var(--line)),
    linear-gradient(var(--line), var(--line)), linear-gradient(var(--line), var(--line)),
    linear-gradient(var(--line), var(--line)), linear-gradient(var(--line), var(--line));
  background-size: 1px 100%;
  background-repeat: no-repeat;
  background-position: 68px 0, 117px 0, 165px 0, 214px 0, 322px 0, 370px 0,
    418px 0, 467px 0, 515px 0, 564px 0, 612px 0, 1194px 0;
}
.row {
  display: grid;
  grid-template-columns: 21px 48px 49px 48px 49px 108px 48px 48px 49px 48px 49px 48px;
  grid-template-rows: 100%;
  height: 15.4px;
  box-sizing: border-box;
  border-bottom: 1px solid var(--line);
}
.head {
  height: 14px;
  background-color: #e6e6e6;
  border-bottom: 1px solid #b5b5b5;
}
.head span {
  font-size: 10px;
  line-height: 13px;
  text-align: center;
  color: #444444;
  border-right: 1px solid #c4c4c4;
}
.head .on {
  height: 13px;
  background-color: #c6c6c6;
  color: #1f5c36;
  border-bottom: 2px solid #217346;
  box-sizing: border-box;
}
.corner {
  position: relative;
}
.corner::after {
  content: "";
  position: absolute;
  right: 2px;
  bottom: 1px;
  border-left: 7px solid transparent;
  border-bottom: 7px solid #b4b4b4;
}
.row:nth-child(2) { height: 15px; }
.rh {
  grid-column: 1;
  font-size: 10px;
  line-height: 15px;
  text-align: center;
  background-color: #e6e6e6;
  color: #444444;
  border-right: 1px solid #b5b5b5;
  margin-bottom: -1px;
}
.data {
  height: 27px;
}
.rh.on {
  background-color: #c6c6c6;
  color: #1f5c36;
  line-height: 33px;
  border-right: 2px solid #217346;
  box-sizing: border-box;
  border-bottom: 1px solid #b5b5b5;
}
.cell {
  font-family: "Lato", "Liberation Sans", sans-serif;
  font-size: 18.5px;
  line-height: 31px;
  color: #000000;
  background-color: #c6c6c6;
  box-sizing: border-box;
  white-space: nowrap;
  margin-bottom: -1px;
  border-bottom: 1px solid #b5b5b5;
}
.name {
  grid-column: 6;
  padding-left: 3px;
  border-right: 1px solid #b5b5b5;
}
.val {
  grid-column: 7;
  padding-right: 3px;
  text-align: right;
  border-right: 1px solid #e2e2e2;
}
.active {
  background-color: #ffffff;
  border-color: #ffffff;
}
.selection {
  position: absolute;
  left: 213px;
  top: 28px;
  width: 158px;
  height: 137px;
  box-sizing: border-box;
  border: 2px solid #217346;
}
.handle {
  position: absolute;
  right: -4px;
  bottom: -4px;
  width: 4px;
  height: 4px;
  background-color: #217346;
  border: 1px solid #ffffff;
}

/* dark chart */
.dark-chart {
  position: absolute;
  left: 141px;
  top: 312px;
  width: 364px;
  height: 221px;
  background: radial-gradient(ellipse at center, #5a5a5a 0%, #494949 50%, #2e2e2e 100%);
  outline: 1px solid #b8b8b8;
}
.dark-chart svg { display: block; }
.dc-title {
  font-family: "Open Sans", sans-serif;
  font-size: 39px;
  font-weight: bold;
  letter-spacing: 3px;
  fill: #ffffff;
}
.dc-axis {
  font-family: "Open Sans", sans-serif;
  font-size: 25px;
  fill: #d9d9d9;
}
.dc-data {
  font-family: "Open Sans", sans-serif;
  font-size: 25px;
  fill: #e8e8e8;
}
.dc-legend {
  font-family: "Open Sans", sans-serif;
  font-size: 24px;
  fill: #d0d0d0;
}

/* dialog */
.dialog {
  position: absolute;
  left: 612px;
  top: 130px;
  width: 579px;
  height: 510px;
  box-sizing: border-box;
  display: flex;
  flex-direction: column;
  padding: 0 5px 0 5px;
  background-color: #ffffff;
  border-top: 1px solid #9cc3e5;
  border-left: 2px solid #2b88d8;
  border-right: 2px solid #2b88d8;
}
.dialog-title {
  display: flex;
  align-items: center;
  height: 26px;
  padding: 0 7px 0 1px;
  font-size: 10px;
  color: #333333;
}
.dialog-title > span:first-child { flex: 1; }
.help {
  margin-right: 32px;
  font-size: 12px;
  font-weight: 600;
}
.tabs {
  display: flex;
  align-items: flex-end;
  height: 26px;
  background-color: #f0f0f0;
}
.tab {
  width: 110px;
  height: 16px;
  padding-left: 5px;
  font-size: 9.5px;
  line-height: 15px;
  letter-spacing: .12px;
  color: #333333;
  border: 1px solid #dedede;
  border-bottom: none;
  box-sizing: border-box;
  white-space: nowrap;
}
.tab.current {
  width: auto;
  height: 24px;
  line-height: 22px;
  padding: 0 9px;
  font-size: 10px;
  background-color: #ffffff;
  border-color: #ffffff;
  letter-spacing: 0;
}
.dialog-body {
  display: flex;
  flex: 1;
  padding-top: 12px;
  border-left: 1px solid #e4e4e4;
  border-right: 1px solid #e4e4e4;
  min-height: 0;
}
.type-list {
  width: 124px;
  height: 428px;
  box-sizing: border-box;
  padding-left: 10px;
  border-right: 1px solid #d0d0d0;
  flex: none;
}
.type {
  display: flex;
  align-items: center;
  gap: 10px;
  width: 103px;
  height: 21.6px;
  padding-left: 4px;
  box-sizing: border-box;
  font-size: 10.5px;
  color: #5f5f5f;
  white-space: nowrap;
}
.type svg {
  flex: none;
  width: 15px;
  height: 15px;
}
.type.selected {
  background-color: #c6c6c6;
  color: #333333;
}
.pane {
  flex: 1;
  padding-left: 10px;
  min-width: 0;
}
.subtypes {
  display: flex;
}
.subtype {
  flex: none;
  width: 50.4px;
  height: 51px;
  padding: 0;
  border: none;
  background: none;
}
.subtype svg {
  display: block;
  width: 50.4px;
  height: 51px;
}
.subtype.on { background-color: #c0c0c0; }
.subtype .w { fill: #ffffff; stroke: #777777; stroke-width: .7; }
.subtype .g { fill: #d2d2d2; stroke: #777777; stroke-width: .7; }
.pane-rule {
  width: 416px;
  margin: 4px 0 0 2px;
  border-top: 1px solid #c8c8c8;
}
.pane-heading {
  margin: 6px 0 0 2px;
  font-size: 13px;
  line-height: 19px;
  letter-spacing: .3px;
  color: #444444;
  white-space: nowrap;
}
.previews {
  display: grid;
  grid-template-columns: 195px 203px;
  grid-auto-rows: 124px;
  column-gap: 3px;
  padding: 3px 0 0 4px;
}
.preview {
  align-self: center;
  width: 195px;
  height: 117px;
  box-sizing: border-box;
  border: 1px solid #f0f0f0;
  background-color: #ffffff;
}
.preview svg { display: block; }
.preview.picked {
  width: 203px;
  height: 124px;
  border: 4px solid #c0c0c0;
}
.pv-title {
  font-family: "Open Sans", sans-serif;
  font-size: 19px;
  fill: #595959;
}
.pv-axis, .pv-legend {
  font-family: "Open Sans", sans-serif;
  font-size: 11px;
  fill: #777777;
}

/* red annotations */
.marks {
  position: absolute;
  left: 0;
  top: 0;
  width: 1200px;
  height: 630px;
  fill: none;
  stroke: #ed1c24;
  stroke-width: 3;
  pointer-events: none;
}
.marks .heavy { stroke-width: 4; }
.marks .mark-fill {
  fill: #ed1c24;
  stroke: none;
}
```
